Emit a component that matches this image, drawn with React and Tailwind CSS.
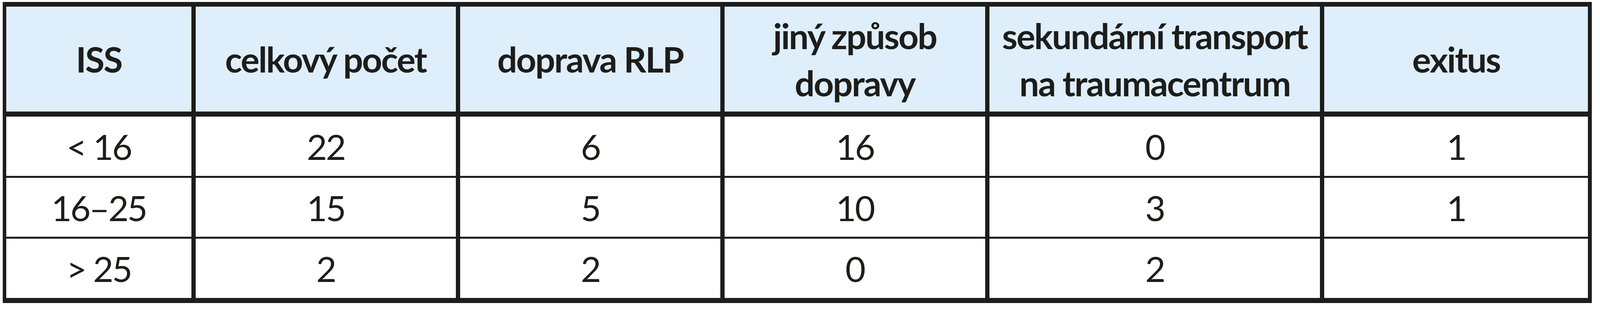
import React from 'react';

// ISS table: trauma patients split by transport mode.
// Columns are fractions so the table fills the window width.
const COLS = 'grid grid-cols-[609fr_856fr_856fr_857fr_1088fr_867fr] gap-x-[11px]';

const HEAD = [
  ['ISS'],
  ['celkový počet'],
  ['doprava RLP'],
  ['jiný způsob', 'dopravy'],
  ['sekundární transport', 'na traumacentrum'],
  ['exitus'],
];

const ROWS = [
  { h: 'h-[152px]', cells: ['< 16', '22', '6', '16', '0', '1'] },
  { h: 'h-[151px]', cells: ['16–25', '15', '5', '10', '3', '1'] },
  { h: 'h-[152px]', cells: ['> 25', '2', '2', '0', '2', ''] },
];

export default function App() {
  return (
    <div className="bg-white w-full h-[800px] pt-[5px] pl-[7px] pr-[21px] font-['Lato','Open_Sans',sans-serif] text-[#1d1d1b]">
      <div className="w-full bg-[#1d1d1b] pt-[12px] pl-[9px] pr-[10px] pb-[13px] flex flex-col">
        <div className={COLS}>
          {HEAD.map((lines, i) => (
            <div key={i} className="min-w-0 h-[269px] bg-[#dfeefb] flex flex-col items-center justify-center font-bold text-[90px] leading-[121px] tracking-[-0.03em] text-center whitespace-nowrap">
              {lines.map(l => <span key={l}>{l}</span>)}
            </div>
          ))}
        </div>
        {ROWS.map((r, ri) => (
          <div key={ri} className={`${COLS} ${ri === 0 ? 'mt-[13px]' : 'mt-[5px]'}`}>
            {r.cells.map((c, ci) => (
              <div key={ci} className={`min-w-0 ${r.h} bg-white flex items-center justify-center text-[90px] leading-none tracking-[-0.04em]`}>
                {c}
              </div>
            ))}
          </div>
        ))}
      </div>
    </div>
  );
}
